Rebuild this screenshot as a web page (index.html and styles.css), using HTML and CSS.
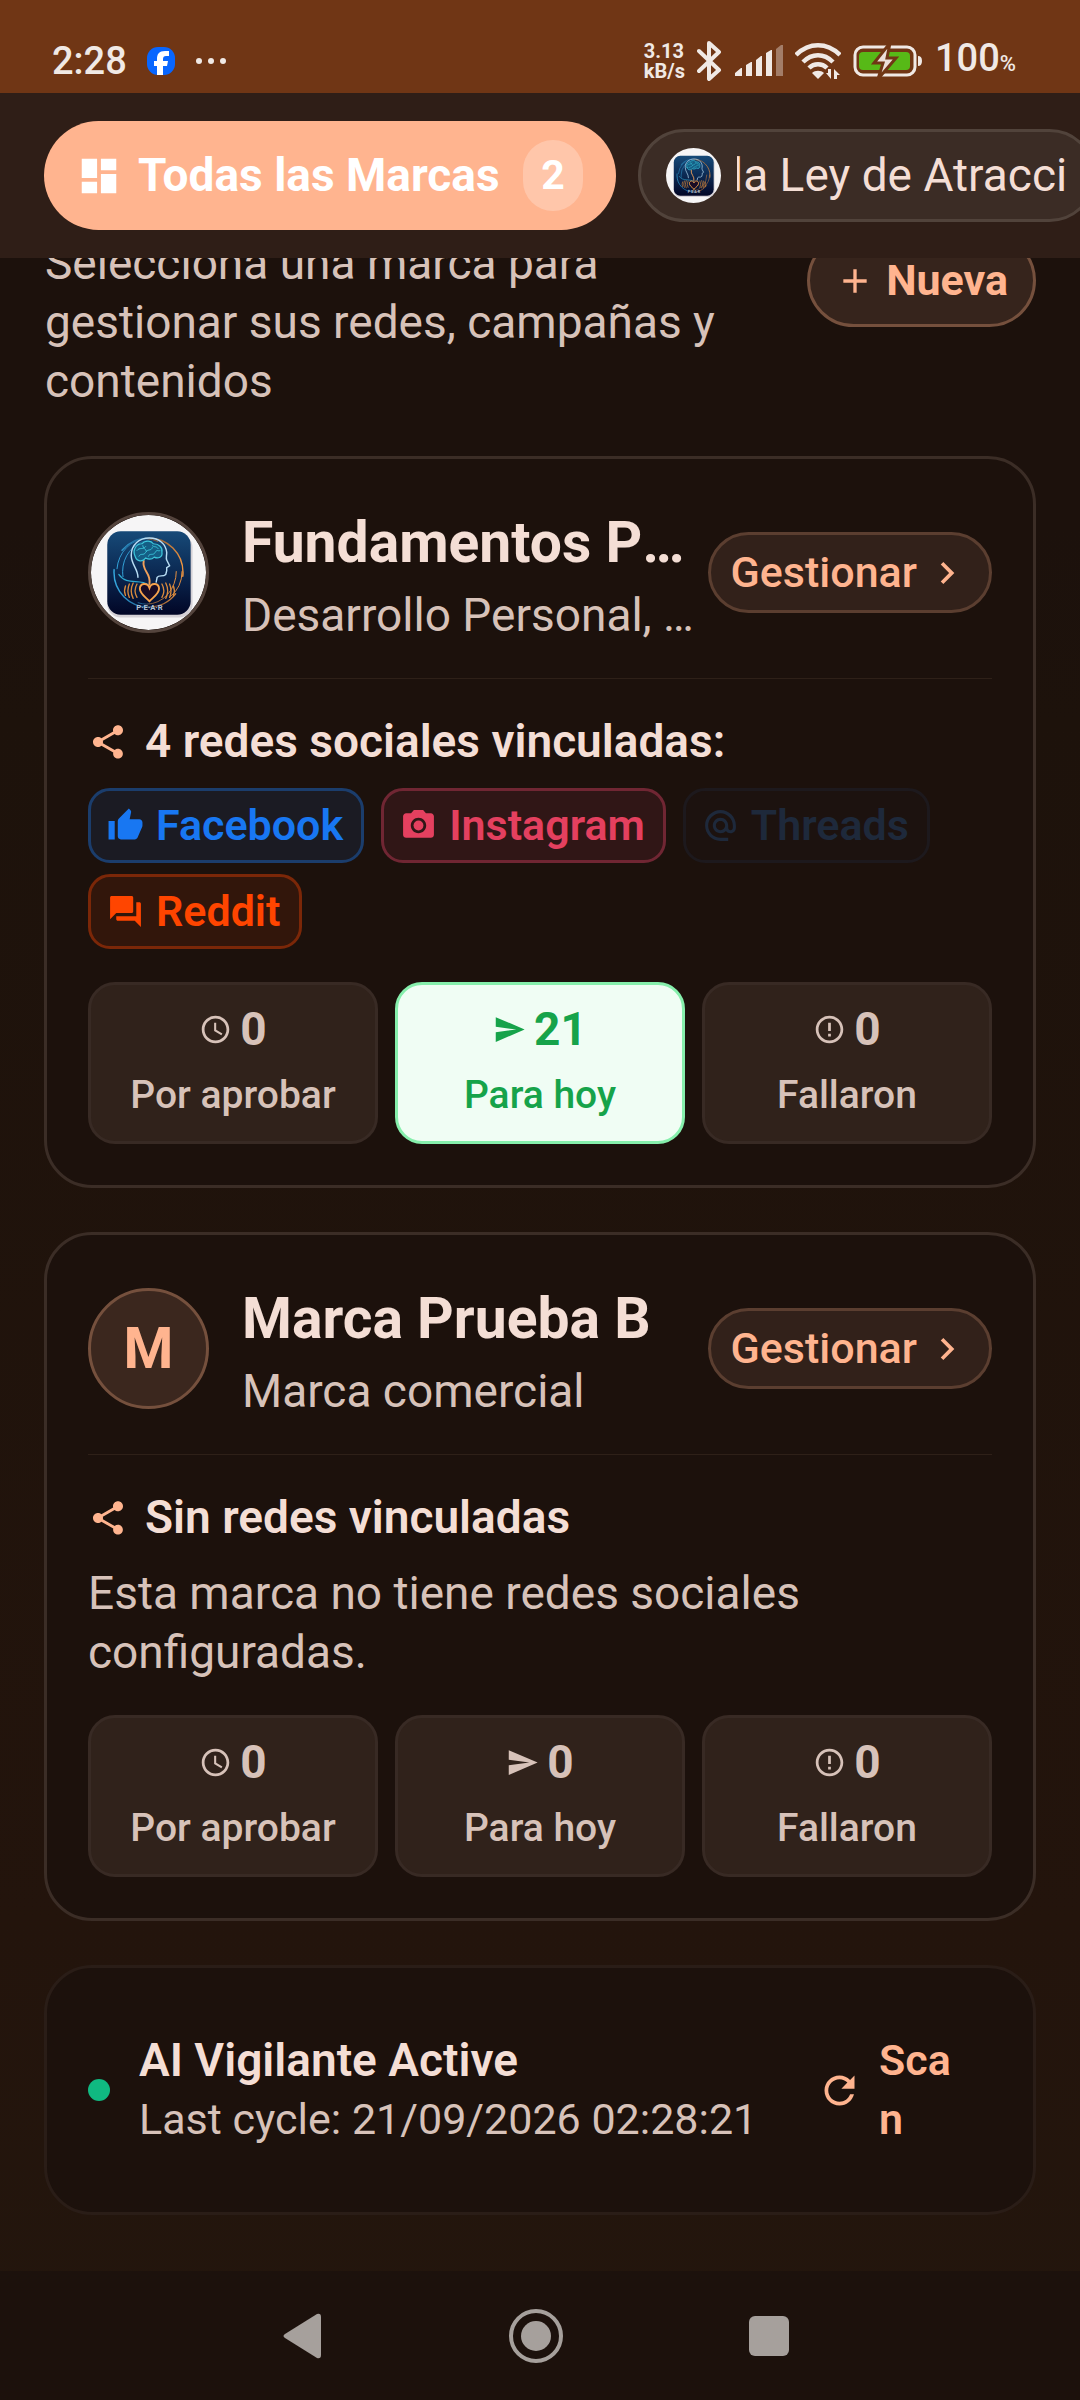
FILE: index.html
```html
<!DOCTYPE html>
<html lang="es">
  <head>
    <meta charset="utf-8"/>
    <meta name="viewport" content="width=device-width">
    <title>Marcas</title>
    <link rel="stylesheet" href="styles.css">
  </head>

  <body>
    <!-- shared icons -->
    <svg class="sprite" aria-hidden="true">
      <defs>
        <linearGradient id="tile" x1="0" y1="0" x2="0" y2="1">
          <stop offset="0" stop-color="#174a78"/>
          <stop offset="0.45" stop-color="#0c2c56"/>
          <stop offset="1" stop-color="#020626"/>
        </linearGradient>
        <linearGradient id="ring" x1="0" y1="0" x2="1" y2="0">
          <stop offset="0" stop-color="#35a9e0"/>
          <stop offset="0.45" stop-color="#1c5c8c"/>
          <stop offset="0.6" stop-color="#8a5a35"/>
          <stop offset="1" stop-color="#ef9440"/>
        </linearGradient>
      </defs>
      <symbol id="pear" viewBox="0 0 120 120">
        <circle cx="60" cy="60" r="60" fill="#f6f5f6"/>
        <rect x="17" y="20" width="89" height="87" rx="14" fill="#d5d1d6"/>
        <rect x="17" y="17" width="87" height="87" rx="14" fill="url(#tile)"/>
        <g fill="none" stroke-linecap="round">
          <circle cx="60" cy="60" r="36" stroke="url(#ring)" stroke-width="1.5" stroke-dasharray="92 22 92 20" stroke-dashoffset="-24"/>
          <ellipse cx="58" cy="59" rx="31" ry="34" stroke="url(#ring)" stroke-width="1" stroke-dasharray="60 45"/>
          <ellipse cx="64" cy="59" rx="31" ry="33" stroke="url(#ring)" stroke-width="1" stroke-dasharray="50 65" stroke-dashoffset="20"/>
          <path d="M49 65c0-9-7-13-7-23 0-11 8-18 19-18 10 0 17 6 18 15 0 4-1 6 0 8l3 6-3 2 0 3-1 4c-3 3-7 0-9 3l-1 5" stroke="#b9def5" stroke-width="1.5"/>
          <path d="M29 62c8 12 22 4 31 11" stroke="#2fa8cf" stroke-width="1.3"/>
          <path d="M55 48c-2 11 8 12 6 24" stroke="#f0a05a" stroke-width="2"/>
          <path d="M46 43c-3-6 1-13 7-13 4-4 10-3 12 0 6 0 10 4 9 9 1 5-4 7-8 5-3 3-7 2-9 1-3 4-9 4-11-2z" fill="#155e85" stroke="#3cc7dc" stroke-width="1.3"/>
          <path d="M48 37c3-4 6 0 9-4M50 43c2-4 5 0 7-4s6-1 7-5M60 43c1-4 5 0 7-4s4 0 5-2M64 32c2 2 4 0 6 3M54 32c0 3 3 3 4 6" stroke="#3cc7dc" stroke-width="1"/>
          <path d="M48 72q-4 7 0 14M44 71q-4 8 0 16M40 72q-3 7 0 14M36 74q-2 5 0 10M74 72q4 7 0 14M78 71q4 8 0 16M82 72q3 7 0 14M86 74q2 5 0 10" stroke="#d8893c" stroke-width="1.4"/>
          <path d="M61 90c-5-5-10-8-10-13 0-6 8-7 10-1 2-6 10-5 10 1 0 5-5 8-10 13z" fill="#1a0c25" stroke="#f6a24c" stroke-width="2"/>
        </g>
        <text x="61" y="99" text-anchor="middle" class="pear-text">P·E·A·R</text>
      </symbol>
      <symbol id="share" viewBox="0 0 24 24"><path d="M18 16.08c-.76 0-1.44.3-1.96.77L8.91 12.7c.05-.23.09-.46.09-.7s-.04-.47-.09-.7l7.05-4.11c.54.5 1.25.81 2.04.81 1.66 0 3-1.34 3-3s-1.34-3-3-3-3 1.34-3 3c0 .24.04.47.09.7L8.04 9.81C7.5 9.31 6.79 9 6 9c-1.66 0-3 1.34-3 3s1.34 3 3 3c.79 0 1.5-.31 2.04-.81l7.12 4.16c-.05.21-.08.43-.08.65 0 1.61 1.31 2.92 2.92 2.92s2.92-1.31 2.92-2.92-1.31-2.92-2.92-2.92z"/></symbol>
      <symbol id="chevron" viewBox="0 0 24 24"><path d="M10 6L8.59 7.41 13.17 12l-4.58 4.59L10 18l6-6z"/></symbol>
      <symbol id="clock" viewBox="0 0 24 24"><path d="M11.99 2C6.47 2 2 6.48 2 12s4.47 10 9.99 10C17.52 22 22 17.52 22 12S17.52 2 11.99 2zM12 20c-4.42 0-8-3.58-8-8s3.58-8 8-8 8 3.58 8 8-3.58 8-8 8zm.5-13H11v6l5.25 3.15.75-1.23-4.5-2.67z"/></symbol>
      <symbol id="send" viewBox="0 0 24 24"><path d="M2.01 21L23 12 2.01 3 2 10l15 2-15 2z"/></symbol>
      <symbol id="alert" viewBox="0 0 24 24"><path d="M11 15h2v2h-2zm0-8h2v6h-2zm.99-5C6.47 2 2 6.48 2 12s4.47 10 9.99 10C17.52 22 22 17.52 22 12S17.52 2 11.99 2zM12 20c-4.42 0-8-3.58-8-8s3.58-8 8-8 8 3.58 8 8-3.58 8-8 8z"/></symbol>
    </svg>

    <div class="statusbar">
      <span class="time">2:28</span>
      <svg class="fb" viewBox="0 0 28 28"><rect width="28" height="28" rx="11" fill="#0866ff"/><path d="M10 28v-9H7v-5h3v-2c0-5 2-8 8-8h4v5h-3c-2 0-3 1-3 3v2h5l-1 5h-4v9z" fill="#fff"/></svg>
      <svg class="dots" viewBox="0 0 32 8"><circle cx="4" cy="4" r="3"/><circle cx="16" cy="4" r="3"/><circle cx="28" cy="4" r="3"/></svg>
      <div class="status-right">
        <div class="speed"><div>3.13</div><div>kB/s</div></div>
        <svg class="bt" viewBox="0 0 26 40"><path d="M2 10l20 19-10 9V2l10 9L2 30" fill="none" stroke="#f0e9e5" stroke-width="4" stroke-linejoin="round" stroke-linecap="round"/></svg>
        <svg class="signal" viewBox="0 0 48 32"><path d="M0 31v-3l6-5h1v8zM11 31V20l5-3h1v14zM21 31V15l5-4h1v20zM31 31V8l5-3h1v26z"/><path d="M41 31V4l5-4h2v31z" opacity=".4"/></svg>
        <svg class="wifi" viewBox="0 0 46 36"><g fill="none" stroke="#f0e9e5" stroke-width="4.5"><path d="M1 12C14-1 32-1 45 12"/><path d="M8 19c9-9 21-9 30 0"/><path d="M14 25c5-5 13-5 18 0"/></g><path d="M17 30c3-3 9-3 12 0l-6 6z"/><path d="M33 26h3v10l-5-6h2zM39 36V26l6 6h-3v4z"/></svg>
        <svg class="battery" viewBox="0 0 70 32"><rect x="2" y="2" width="60" height="28" rx="8" fill="none" stroke="#f0e9e5" stroke-width="3"/><rect x="6" y="7" width="51" height="18" rx="4" fill="#57b917"/><path d="M65 11q4 0 4 5t-4 5z"/><path d="M37-2L21 18h9l-5 16L43 13h-9z" fill="#ecdfd9" stroke="#703615" stroke-width="3"/></svg>
        <span class="time">100<small>%</small></span>
      </div>
    </div>

    <header class="brands">
      <button class="pill pill-active">
        <svg class="icon" viewBox="0 0 24 24"><path d="M3 13h8V3H3v10zm0 8h8v-6H3v6zm10 0h8V11h-8v10zm0-18v6h8V3h-8z"/></svg>
        Todas las Marcas
        <span class="count">2</span>
      </button>
      <button class="pill pill-brand">
        <svg class="thumb"><use href="#pear"/></svg>
        <span class="marquee">la Ley de Atracción</span>
      </button>
    </header>

    <main>
      <section class="intro">
        <p>Selecciona una marca para gestionar sus redes, campañas y contenidos</p>
        <button class="new">
          <svg viewBox="0 0 24 24"><path d="M19 13h-6v6h-2v-6H5v-2h6V5h2v6h6v2z"/></svg>
          Nueva
        </button>
      </section>

      <article class="card">
        <div class="card-head">
          <svg class="avatar"><use href="#pear"/></svg>
          <div class="names">
            <h2>Fundamentos PEAR</h2>
            <p>Desarrollo Personal, Bienestar</p>
          </div>
          <button class="manage">Gestionar <svg><use href="#chevron"/></svg></button>
        </div>
        <hr>
        <h3><svg><use href="#share"/></svg>4 redes sociales vinculadas:</h3>
        <ul class="chips">
          <li class="chip facebook"><svg viewBox="0 0 24 24"><path d="M1 21h4V9H1v12zm22-11c0-1.1-.9-2-2-2h-6.31l.95-4.57.03-.32c0-.41-.17-.79-.44-1.06L14.17 1 7.59 7.59C7.22 7.95 7 8.45 7 9v10c0 1.1.9 2 2 2h9c.83 0 1.54-.5 1.84-1.22l3.02-7.05c.09-.23.14-.47.14-.73v-2z"/></svg>Facebook</li>
          <li class="chip instagram"><svg viewBox="0 0 24 24"><circle cx="12" cy="12" r="3.2"/><path d="M9 2L7.17 4H4c-1.1 0-2 .9-2 2v12c0 1.1.9 2 2 2h16c1.1 0 2-.9 2-2V6c0-1.1-.9-2-2-2h-3.17L15 2H9zm3 15c-2.76 0-5-2.24-5-5s2.24-5 5-5 5 2.24 5 5-2.24 5-5 5z"/></svg>Instagram</li>
          <li class="chip threads"><svg viewBox="0 0 24 24"><path d="M12 2C6.48 2 2 6.48 2 12s4.48 10 10 10h5v-2h-5c-4.34 0-8-3.66-8-8s3.66-8 8-8 8 3.66 8 8v1.43c0 .79-.71 1.57-1.5 1.57s-1.5-.78-1.5-1.57V12c0-2.76-2.24-5-5-5s-5 2.24-5 5 2.24 5 5 5c1.38 0 2.64-.56 3.54-1.47.65.89 1.77 1.47 2.96 1.47 1.97 0 3.5-1.6 3.5-3.57V12c0-5.52-4.48-10-10-10zm0 13c-1.66 0-3-1.34-3-3s1.34-3 3-3 3 1.34 3 3-1.34 3-3 3z"/></svg>Threads</li>
          <li class="chip reddit"><svg viewBox="0 0 24 24"><path d="M21 6h-2v9H6v2c0 .55.45 1 1 1h11l4 4V7c0-.55-.45-1-1-1zm-4 6V3c0-.55-.45-1-1-1H3c-.55 0-1 .45-1 1v14l4-4h10c.55 0 1-.45 1-1z"/></svg>Reddit</li>
        </ul>
        <div class="stats">
          <div class="stat"><b><svg><use href="#clock"/></svg>0</b><span>Por aprobar</span></div>
          <div class="stat today"><b><svg><use href="#send"/></svg>21</b><span>Para hoy</span></div>
          <div class="stat"><b><svg><use href="#alert"/></svg>0</b><span>Fallaron</span></div>
        </div>
      </article>

      <article class="card">
        <div class="card-head">
          <div class="avatar letter">M</div>
          <div class="names">
            <h2>Marca Prueba B</h2>
            <p>Marca comercial</p>
          </div>
          <button class="manage">Gestionar <svg><use href="#chevron"/></svg></button>
        </div>
        <hr>
        <h3><svg><use href="#share"/></svg>Sin redes vinculadas</h3>
        <p class="empty">Esta marca no tiene redes sociales configuradas.</p>
        <div class="stats">
          <div class="stat"><b><svg><use href="#clock"/></svg>0</b><span>Por aprobar</span></div>
          <div class="stat"><b><svg><use href="#send"/></svg>0</b><span>Para hoy</span></div>
          <div class="stat"><b><svg><use href="#alert"/></svg>0</b><span>Fallaron</span></div>
        </div>
      </article>

      <section class="card watcher">
        <span class="dot"></span>
        <div class="watcher-text">
          <h3>AI Vigilante Active</h3>
          <p>Last cycle: 21/09/2026 02:28:21</p>
        </div>
        <button class="scan">
          <svg viewBox="0 0 24 24"><path d="M17.65 6.35C16.2 4.9 14.21 4 12 4c-4.42 0-7.99 3.58-7.99 8s3.57 8 7.99 8c3.73 0 6.84-2.55 7.73-6h-2.08c-.82 2.33-3.04 4-5.65 4-3.31 0-6-2.69-6-6s2.69-6 6-6c1.66 0 3.14.69 4.22 1.78L13 11h7V4l-2.35 2.35z"/></svg>
          <span>Scan</span>
        </button>
      </section>
    </main>

    <nav class="navbar">
      <button aria-label="Atrás"><svg viewBox="0 0 56 56"><path d="M10 26L42 6q4-1 4 3v38q0 4-4 3L10 30q-3-2 0-4z"/></svg></button>
      <button aria-label="Inicio"><svg viewBox="0 0 56 56"><circle cx="28" cy="28" r="25" fill="none" stroke="#a6a09c" stroke-width="4"/><circle cx="28" cy="28" r="15"/></svg></button>
      <button aria-label="Recientes"><svg viewBox="0 0 56 56"><rect x="8" y="8" width="40" height="40" rx="6"/></svg></button>
    </nav>
  </body>
</html>
```
FILE: styles.css
```css
* {
  box-sizing: border-box;
}

body {
  margin: 0;
  min-height: 100vh;
  display: flex;
  flex-direction: column;
  background: linear-gradient(#1c110c 22%, #1d120b 30%, #23140c 80%, #23160d);
  color: #d7c2b9;
  font: 46px / 59px Roboto, "Noto Sans", sans-serif;
}

h2, h3, p, ul {
  margin: 0;
  padding: 0;
}

button {
  font: inherit;
  color: inherit;
  background: none;
  border: 0;
  padding: 0;
}

svg {
  display: block;
  flex: none;
  fill: currentColor;
}

.sprite {
  position: absolute;
  width: 0;
  height: 0;
}

.pear-text {
  font: bold 8px Roboto, sans-serif;
  fill: #b5c3d6;
}

/* status bar */
.statusbar {
  height: 93px;
  padding: 32px 64px 3px 52px;
  display: flex;
  align-items: center;
  background: #703615;
  color: #f0e9e5;
  position: relative;
  z-index: 1;
}

.time {
  font-size: 38px;
  font-weight: 500;
  line-height: 56px;
}

.time small {
  font-size: 22px;
}

.fb {
  width: 28px;
  height: 28px;
  margin-left: 20px;
}

.dots {
  width: 32px;
  height: 8px;
  margin-left: 20px;
}

.status-right {
  margin-left: auto;
  display: flex;
  align-items: center;
  gap: 12px;
}

.speed {
  font-size: 20px;
  font-weight: bold;
  line-height: 20px;
}

.bt {
  width: 26px;
  height: 40px;
}

.signal {
  width: 48px;
  height: 32px;
}

.wifi {
  width: 46px;
  height: 36px;
}

.battery {
  width: 70px;
  height: 32px;
}

/* brand selector */
.brands {
  height: 165px;
  padding-left: 44px;
  display: flex;
  align-items: center;
  gap: 22px;
  overflow: hidden;
  background: #2f1e17;
  position: relative;
  z-index: 1;
}

.pill {
  flex: none;
  display: flex;
  align-items: center;
  gap: 16px;
  border-radius: 55px;
  white-space: nowrap;
}

.pill-active {
  height: 109px;
  min-width: 572px;
  padding: 0 33px 0 32px;
  background: #ffb48f;
  color: #fff;
  font-weight: bold;
}

.pill-active .icon {
  width: 46px;
  height: 46px;
}

.count {
  width: 60px;
  height: 71px;
  margin-left: auto;
  border-radius: 30px;
  background: #ffc6aa;
  font-size: 41px;
  line-height: 71px;
  text-align: center;
}

.pill-brand {
  height: 93px;
  padding: 0 25px;
  border: 3px solid #51433b;
  background: #3b2c25;
  color: #f4ded5;
}

.thumb {
  width: 55px;
  height: 55px;
}

.marquee {
  width: 331px;
  overflow: hidden;
  text-indent: -5px;
  text-align: left;
}

main {
  flex: 1;
  padding: 0 44px 56px;
}

/* the page is scrolled: the intro starts behind the selector */
.intro {
  margin: -24px 0 45px;
  padding-left: 1px;
  display: flex;
  justify-content: space-between;
  align-items: flex-start;
}

.intro p {
  max-width: 700px;
}

.new {
  height: 93px;
  padding: 0 25px;
  display: flex;
  align-items: center;
  gap: 11px;
  border: 3px solid #75503d;
  border-radius: 47px;
  background: #36241c;
  color: #ffb48f;
  font-size: 43px;
  font-weight: bold;
}

.new svg {
  width: 40px;
  height: 40px;
}

/* cards */
.card {
  margin-bottom: 44px;
  padding: 41px;
  border: 3px solid #3b2d26;
  border-radius: 48px;
  background: #1c110c;
}

.card-head {
  display: flex;
  align-items: center;
}

.avatar {
  width: 121px;
  height: 121px;
  margin-right: 33px;
  flex: none;
  border: 3px solid #54443d;
  border-radius: 50%;
}

.letter {
  border-color: #75503d;
  background: #3b271e;
  color: #ffb48f;
  font-size: 57px;
  font-weight: bold;
  line-height: 115px;
  text-align: center;
}

.names {
  flex: 1;
  min-width: 0;
  margin-right: 10px;
}

.names h2,
.names p {
  overflow: hidden;
  white-space: nowrap;
  text-overflow: ellipsis;
}

.names h2 {
  color: #f4ded5;
  font-size: 57px;
  line-height: 86px;
}

.manage {
  height: 81px;
  padding: 0 20px;
  display: flex;
  align-items: center;
  gap: 8px;
  border: 3px solid #5b3e30;
  border-radius: 41px;
  background: #32211a;
  color: #ffb48f;
  font-size: 43px;
  font-weight: 500;
}

.manage svg {
  width: 44px;
  height: 44px;
}

hr {
  height: 1px;
  margin: 33px 0;
  border: 0;
  background: #2e2018;
}

h3 {
  display: flex;
  align-items: center;
  gap: 17px;
  color: #f4ded5;
  font-size: 46px;
  font-weight: 600;
}

h3 svg {
  width: 40px;
  height: 40px;
  color: #ffb48f;
}

.chips {
  margin-top: 17px;
  display: flex;
  flex-wrap: wrap;
  gap: 11px 17px;
  list-style: none;
}

.chip {
  height: 75px;
  padding: 0 18px 0 16px;
  display: flex;
  align-items: center;
  gap: 12px;
  border: 3px solid;
  border-radius: 22px;
  font-size: 43px;
  font-weight: 600;
}

.chip svg {
  width: 37px;
  height: 37px;
}

.facebook {
  color: #1877f2;
  background: #1b1b23;
  border-color: #1b3d6c;
}

.instagram {
  color: #e4405f;
  background: #301616;
  border-color: #702633;
}

.threads {
  color: #1e293b;
  background: #1c120f;
  border-color: #1d191d;
}

.reddit {
  color: #ff4500;
  background: #32160b;
  border-color: #7b2708;
}

.empty {
  margin-top: 17px;
}

.stats {
  margin-top: 33px;
  display: grid;
  grid-template-columns: repeat(3, 1fr);
  gap: 17px;
}

.stat {
  height: 162px;
  padding-top: 15px;
  border: 3px solid #382a24;
  border-radius: 27px;
  background: #30221b;
  text-align: center;
}

.stat b {
  display: flex;
  justify-content: center;
  align-items: center;
  gap: 8px;
}

.stat b svg {
  width: 33px;
  height: 33px;
}

.stat span {
  display: block;
  margin-top: 7px;
  font-size: 39px;
  font-weight: 500;
}

.today {
  color: #16a34a;
  background: #f0fdf4;
  border-color: #86efac;
}

/* watcher */
.watcher {
  margin-bottom: 0;
  display: flex;
  align-items: center;
  border-color: #2a1d17;
}

.dot {
  width: 22px;
  height: 22px;
  margin-right: 29px;
  flex: none;
  border-radius: 50%;
  background: #10b981;
}

.watcher-text {
  flex: 1;
}

.watcher-text p {
  font-size: 43px;
  white-space: nowrap;
}

.scan {
  padding: 22px 33px 22px 0;
  display: flex;
  align-items: center;
  gap: 17px;
  color: #ffb48f;
  font-size: 43px;
  font-weight: 600;
  text-align: left;
}

.scan svg {
  width: 45px;
  height: 45px;
}

/* narrow label, breaks inside the word */
.scan span {
  width: 80px;
  word-break: break-all;
}

/* android navigation */
.navbar {
  height: 130px;
  padding-right: 8px;
  display: flex;
  align-items: center;
  justify-content: center;
  gap: 177px;
  background: #1c110c;
  color: #a6a09c;
}

.navbar svg {
  width: 56px;
  height: 56px;
}
```
